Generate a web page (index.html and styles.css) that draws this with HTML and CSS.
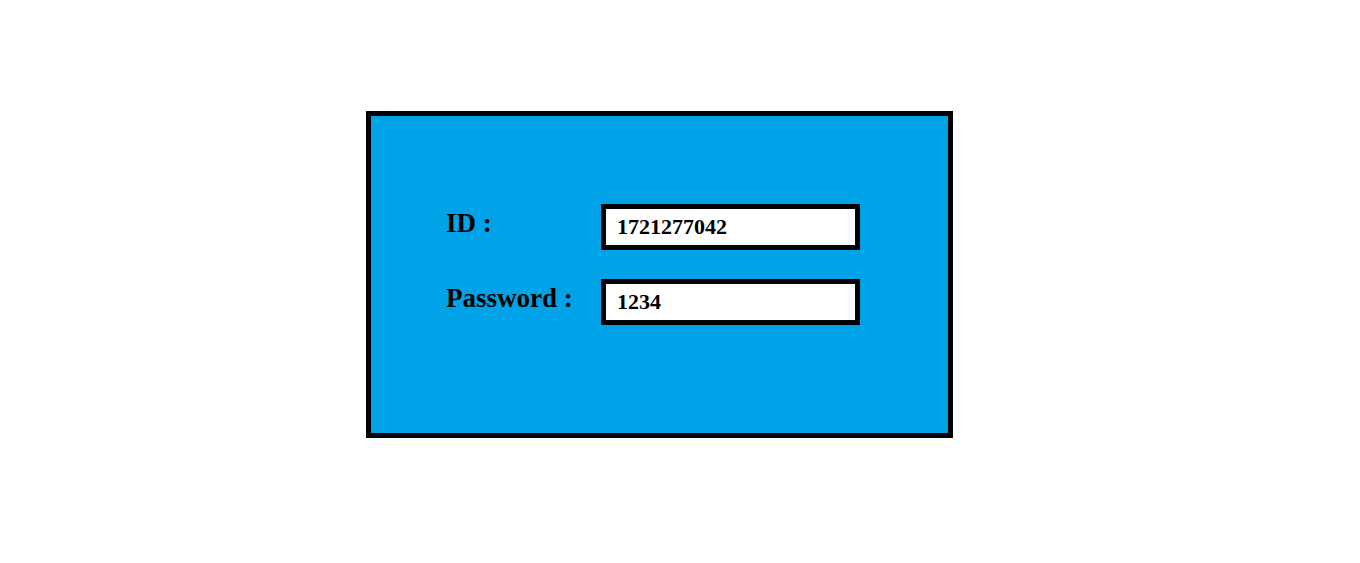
FILE: index.html
```html
<!DOCTYPE html>
<html lang="en">
<head>
<meta charset="utf-8">
<title>Login</title>
<link rel="stylesheet" href="styles.css">
</head>
<body>
<main class="page">
  <form class="login">
    <div class="field">
      <label class="label" for="user-id">ID :</label>
      <input class="input" id="user-id" type="text" value="1721277042">
    </div>
    <div class="field">
      <label class="label" for="password">Password :</label>
      <input class="input" id="password" type="text" value="1234">
    </div>
  </form>
</main>
</body>
</html>
```

FILE: styles.css
```css
* {
  box-sizing: border-box;
}

body {
  margin: 0;
  background: #fff;
  color: #000;
  font-family: "Liberation Serif", "Times New Roman", serif;
  font-weight: 700;
}

.page {
  display: flex;
  justify-content: center;
  padding: 111px 41px 40px 0;
}

.login {
  display: flex;
  flex-direction: column;
  gap: 29px;
  width: 100%;
  max-width: 587px;
  padding: 88px 88px 108px 75px;
  border: 5px solid #000;
  background: #00a2e8;
}

.field {
  display: flex;
  align-items: flex-start;
}

.label {
  flex: 0 0 155px;
  padding-top: 3px;
  font-size: 27px;
  line-height: 32px;
}

.input {
  flex: 1;
  min-width: 0;
  height: 46px;
  padding: 0 11px 1px;
  border: 5px solid #000;
  border-radius: 0;
  background: #fff;
  color: inherit;
  font: inherit;
  font-size: 22px;
}
```
